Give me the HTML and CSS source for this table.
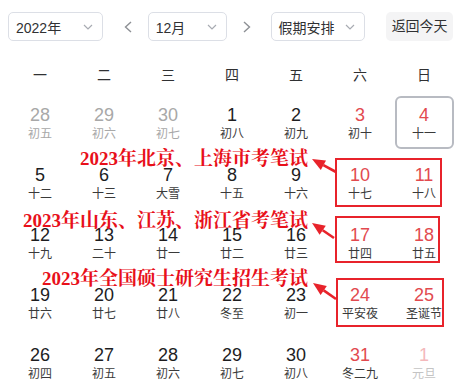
FILE: index.html
```html
<!DOCTYPE html>
<html lang="zh-CN">
<head>
<meta charset="utf-8">
<title>日历</title>
<link rel="stylesheet" href="styles.css">
</head>
<body>
<div class="page">
  <div class="toolbar">
    <div class="select sel-year"><span>2022年</span><svg class="caret" width="10" height="6" viewBox="0 0 10 6"><polyline points="1,1 5,5 9,1"/></svg></div>
    <div class="nav prev"><svg width="8" height="12" viewBox="0 0 8 12"><polyline points="7,1 1.5,6 7,11"/></svg></div>
    <div class="select sel-month"><span>12月</span><svg class="caret" width="10" height="6" viewBox="0 0 10 6"><polyline points="1,1 5,5 9,1"/></svg></div>
    <div class="nav next"><svg width="8" height="12" viewBox="0 0 8 12"><polyline points="1,1 6.5,6 1,11"/></svg></div>
    <div class="select sel-holiday"><span>假期安排</span><svg class="caret" width="10" height="6" viewBox="0 0 10 6"><polyline points="1,1 5,5 9,1"/></svg></div>
    <div class="today-btn">返回今天</div>
  </div>

  <div class="weekdays">
    <div>一</div><div>二</div><div>三</div><div>四</div><div>五</div><div>六</div><div>日</div>
  </div>

  <div class="grid">
    <div class="cell"><div class="day other"><span class="num">28</span><span class="lunar">初五</span></div></div>
    <div class="cell"><div class="day other"><span class="num">29</span><span class="lunar">初六</span></div></div>
    <div class="cell"><div class="day other"><span class="num">30</span><span class="lunar">初七</span></div></div>
    <div class="cell"><div class="day"><span class="num">1</span><span class="lunar">初八</span></div></div>
    <div class="cell"><div class="day"><span class="num">2</span><span class="lunar">初九</span></div></div>
    <div class="cell"><div class="day weekend"><span class="num">3</span><span class="lunar">初十</span></div></div>
    <div class="cell"><div class="day weekend today"><span class="num">4</span><span class="lunar">十一</span></div></div>

    <div class="cell"><div class="day"><span class="num">5</span><span class="lunar">十二</span></div></div>
    <div class="cell"><div class="day"><span class="num">6</span><span class="lunar">十三</span></div></div>
    <div class="cell"><div class="day"><span class="num">7</span><span class="lunar">大雪</span></div></div>
    <div class="cell"><div class="day"><span class="num">8</span><span class="lunar">十五</span></div></div>
    <div class="cell"><div class="day"><span class="num">9</span><span class="lunar">十六</span></div></div>
    <div class="cell"><div class="day weekend"><span class="num">10</span><span class="lunar">十七</span></div></div>
    <div class="cell"><div class="day weekend"><span class="num">11</span><span class="lunar">十八</span></div></div>

    <div class="cell"><div class="day"><span class="num">12</span><span class="lunar">十九</span></div></div>
    <div class="cell"><div class="day"><span class="num">13</span><span class="lunar">二十</span></div></div>
    <div class="cell"><div class="day"><span class="num">14</span><span class="lunar">廿一</span></div></div>
    <div class="cell"><div class="day"><span class="num">15</span><span class="lunar">廿二</span></div></div>
    <div class="cell"><div class="day"><span class="num">16</span><span class="lunar">廿三</span></div></div>
    <div class="cell"><div class="day weekend"><span class="num">17</span><span class="lunar">廿四</span></div></div>
    <div class="cell"><div class="day weekend"><span class="num">18</span><span class="lunar">廿五</span></div></div>

    <div class="cell"><div class="day"><span class="num">19</span><span class="lunar">廿六</span></div></div>
    <div class="cell"><div class="day"><span class="num">20</span><span class="lunar">廿七</span></div></div>
    <div class="cell"><div class="day"><span class="num">21</span><span class="lunar">廿八</span></div></div>
    <div class="cell"><div class="day"><span class="num">22</span><span class="lunar">冬至</span></div></div>
    <div class="cell"><div class="day"><span class="num">23</span><span class="lunar">初一</span></div></div>
    <div class="cell"><div class="day weekend"><span class="num">24</span><span class="lunar">平安夜</span></div></div>
    <div class="cell"><div class="day weekend"><span class="num">25</span><span class="lunar">圣诞节</span></div></div>

    <div class="cell"><div class="day"><span class="num">26</span><span class="lunar">初四</span></div></div>
    <div class="cell"><div class="day"><span class="num">27</span><span class="lunar">初五</span></div></div>
    <div class="cell"><div class="day"><span class="num">28</span><span class="lunar">初六</span></div></div>
    <div class="cell"><div class="day"><span class="num">29</span><span class="lunar">初七</span></div></div>
    <div class="cell"><div class="day"><span class="num">30</span><span class="lunar">初八</span></div></div>
    <div class="cell"><div class="day weekend"><span class="num">31</span><span class="lunar">冬二九</span></div></div>
    <div class="cell"><div class="day weekend other-weekend"><span class="num">1</span><span class="lunar">元旦</span></div></div>
  </div>

  <div class="annotations">
    <svg class="marks" width="461" height="392" viewBox="0 0 461 392">
      <rect x="336" y="159" width="105" height="47"/>
      <rect x="336" y="217" width="103" height="45"/>
      <rect x="337" y="279" width="106" height="47"/>
      <line x1="323.4" y1="165.2" x2="336" y2="172"/>
      <polygon points="312,159 320.8,170 326,160.4"/>
      <line x1="322.7" y1="230.3" x2="334" y2="238"/>
      <polygon points="312,223 319.6,234.8 325.8,225.8"/>
      <line x1="323.7" y1="290.4" x2="336" y2="299"/>
      <polygon points="313,283 320.6,294.9 326.8,285.9"/>
    </svg>
    <div class="note note-1">2023年北京、上海市考笔试</div>
    <div class="note note-2">2023年山东、江苏、浙江省考笔试</div>
    <div class="note note-3">2023年全国硕士研究生招生考试</div>
  </div>
</div>
</body>
</html>
```

FILE: styles.css
```css
html, body {
  margin: 0;
  padding: 0;
  background: #ffffff;
}

body {
  font-family: "Liberation Sans", "Noto Sans CJK SC", sans-serif;
  color: #303133;
}

.page {
  position: relative;
  width: 461px;
  height: 392px;
  overflow: hidden;
}

.toolbar {
  display: flex;
  align-items: center;
  padding: 12px 8px 0 8px;
  height: 29px;
}

.select {
  box-sizing: border-box;
  height: 29px;
  border: 1px solid #dcdfe6;
  border-radius: 5px;
  display: flex;
  align-items: center;
  justify-content: space-between;
  padding: 0 9px 0 7px;
  font-size: 14px;
  color: #303133;
}

.sel-year { width: 95px; }
.sel-month { width: 79px; }
.sel-holiday { width: 95px; }

.caret polyline {
  fill: none;
  stroke: #a8abb2;
  stroke-width: 1.2;
}

.nav {
  display: flex;
  align-items: center;
  width: 8px;
  height: 29px;
}

.nav polyline {
  fill: none;
  stroke: #8d9095;
  stroke-width: 1.4;
}

.prev { margin: 0 16px 0 21px; }
.next { margin: 0 20px 0 16px; }

.today-btn {
  margin-left: 21px;
  width: 67px;
  height: 29px;
  line-height: 29px;
  text-align: center;
  background: #f4f4f5;
  border-radius: 5px;
  font-size: 14px;
  color: #303133;
}

.weekdays {
  display: grid;
  grid-template-columns: repeat(7, 64px);
  padding: 0 8px;
  margin-top: 18px;
  height: 33px;
  line-height: 33px;
  text-align: center;
  font-size: 14px;
  color: #303133;
}

.grid {
  display: grid;
  grid-template-columns: repeat(7, 64px);
  grid-auto-rows: 60px;
  padding: 0 8px;
}

.cell {
  display: flex;
  align-items: center;
  justify-content: center;
}

.day {
  box-sizing: border-box;
  width: 59px;
  height: 53px;
  padding-top: 8px;
  display: flex;
  flex-direction: column;
  align-items: center;
}

.num {
  font-size: 18px;
  line-height: 22px;
  color: #1d1d1f;
}

.lunar {
  font-size: 12px;
  line-height: 16px;
  color: #3a3a3a;
}

.weekend .num { color: #e24a4f; }

.other .num,
.other .lunar { color: #a8a8a8; }

.other-weekend .num { color: #f4b9bc; }
.other-weekend .lunar { color: #c4c4c4; }

.today {
  border: 2px solid #b8bbc2;
  border-radius: 6px;
  padding-top: 6px;
}

.annotations {
  position: absolute;
  left: 0;
  top: 0;
  width: 461px;
  height: 392px;
  pointer-events: none;
}

.marks {
  position: absolute;
  left: 0;
  top: 0;
}

.marks rect {
  fill: none;
  stroke: #e8232b;
  stroke-width: 2;
}

.marks line {
  stroke: #e8232b;
  stroke-width: 2.6;
}

.marks polygon {
  fill: #e8232b;
}

.note {
  position: absolute;
  right: 153px;
  font-family: "Liberation Serif", "Noto Serif CJK SC", "Noto Sans CJK SC", serif;
  font-weight: bold;
  font-size: 19px;
  line-height: 20px;
  color: #e8101a;
  white-space: nowrap;
}

.note-1 { top: 149px; }
.note-2 { top: 211px; }
.note-3 { top: 269px; }
```
